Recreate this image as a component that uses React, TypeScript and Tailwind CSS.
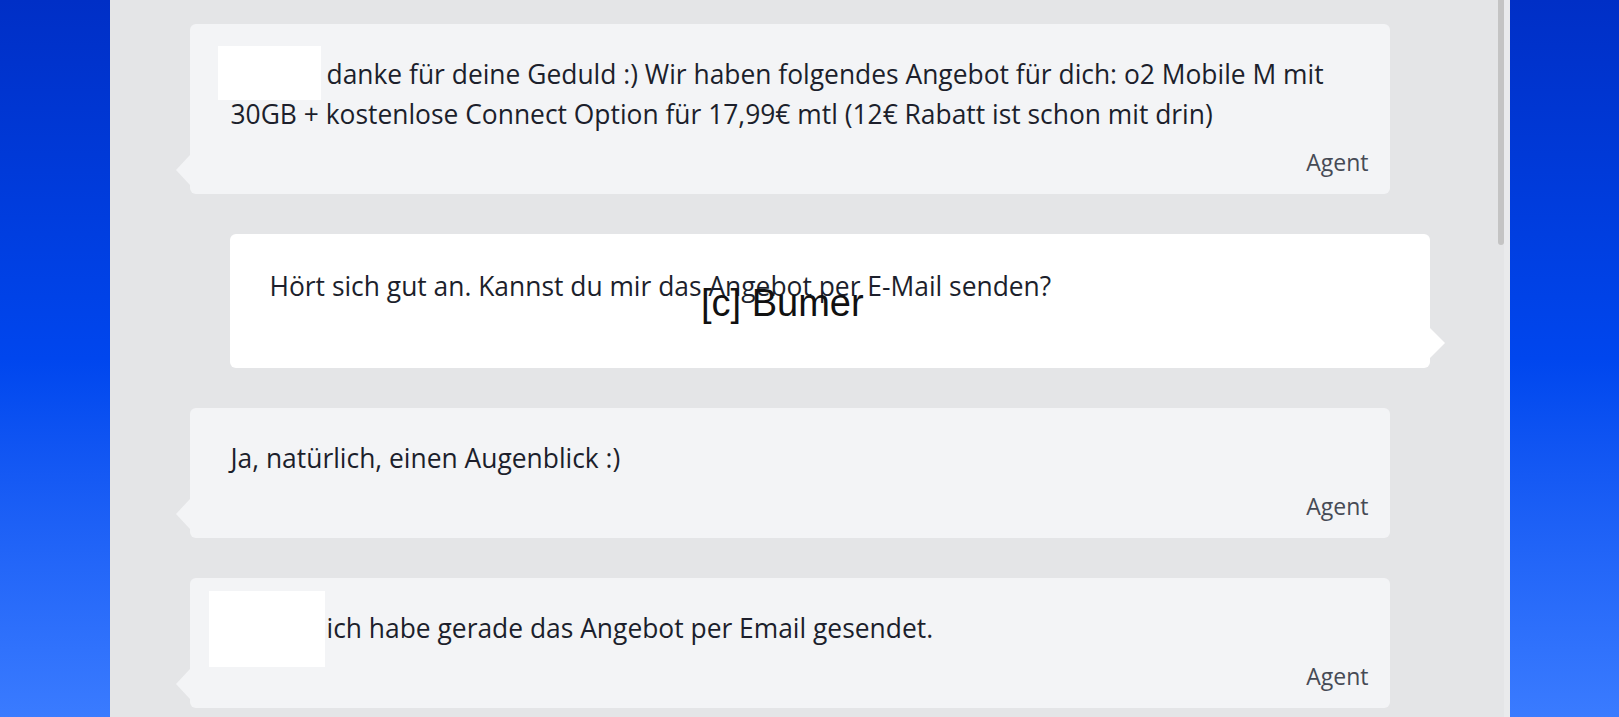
import React from "react";

const font = { fontFamily: "'Open Sans', 'Noto Sans', sans-serif" };

function AgentBubble({
  children,
  redact,
}: {
  children: React.ReactNode;
  redact?: { left: number; top: number; width: number; height: number };
}) {
  return (
    <div className="relative w-[1200px] self-start rounded-md bg-[#f3f4f6] pt-[30px] pb-[17px] pl-[41px] pr-[21px]">
      <div className="absolute left-[-14px] bottom-[9px] h-0 w-0 border-y-[15px] border-r-[14px] border-y-transparent border-r-[#f3f4f6]" />
      {redact && (
        <div
          className="absolute bg-white"
          style={{ left: redact.left, top: redact.top, width: redact.width, height: redact.height }}
        />
      )}
      <div className="text-[26.4px] leading-[40px] text-[#1c1f2c]">{children}</div>
      <div className="mt-[13px] text-right text-[23px] leading-[30px] text-[#464a55]">Agent</div>
    </div>
  );
}

function UserBubble({ children }: { children: React.ReactNode }) {
  return (
    <div className="relative h-[134px] w-[1200px] self-end rounded-md bg-white pt-[32px] pl-[40px] pr-[21px]">
      <div className="absolute right-[-15px] bottom-[10px] h-0 w-0 border-y-[15px] border-l-[15px] border-y-transparent border-l-white" />
      <div className="text-[26.4px] leading-[40px] text-[#1c1f2c]">{children}</div>
    </div>
  );
}

export default function App() {
  return (
    <div
      className="relative flex h-[717px] w-full justify-center overflow-hidden bg-gradient-to-b from-[#002fc6] via-[#0046ee] to-[#3a7bff]"
      style={font}
    >
      <div className="relative h-full w-[1400px] bg-[#e4e5e7]">
        <div className="absolute right-0 top-0 h-full w-[6px] bg-[#e9eaec]" />
        <div className="absolute right-[6px] top-0 h-[245px] w-[6px] rounded-b-full bg-[#c4c4c4]" />
        <div className="flex w-[1320px] flex-col gap-[40px] pl-[80px] pt-[24px]">
          <AgentBubble redact={{ left: 28, top: 22, width: 103, height: 54 }}>
            <span className="inline-block w-[96px]" />
            danke für deine Geduld :) Wir haben folgendes Angebot für dich: o2 Mobile M mit
            <br />
            30GB + kostenlose Connect Option für 17,99€ mtl (12€ Rabatt ist schon mit drin)
          </AgentBubble>
          <UserBubble>Hört sich gut an. Kannst du mir das Angebot per E-Mail senden?</UserBubble>
          <AgentBubble>Ja, natürlich, einen Augenblick :)</AgentBubble>
          <AgentBubble redact={{ left: 19, top: 13, width: 116, height: 76 }}>
            <span className="inline-block w-[96px]" />
            ich habe gerade das Angebot per Email gesendet.
          </AgentBubble>
        </div>
      </div>
      <div
        className="absolute left-[701px] top-[284px] text-[38px] leading-none text-[#111]"
        style={{ fontFamily: "'Liberation Sans', Arial, sans-serif" }}
      >
        [c] Bumer
      </div>
    </div>
  );
}
